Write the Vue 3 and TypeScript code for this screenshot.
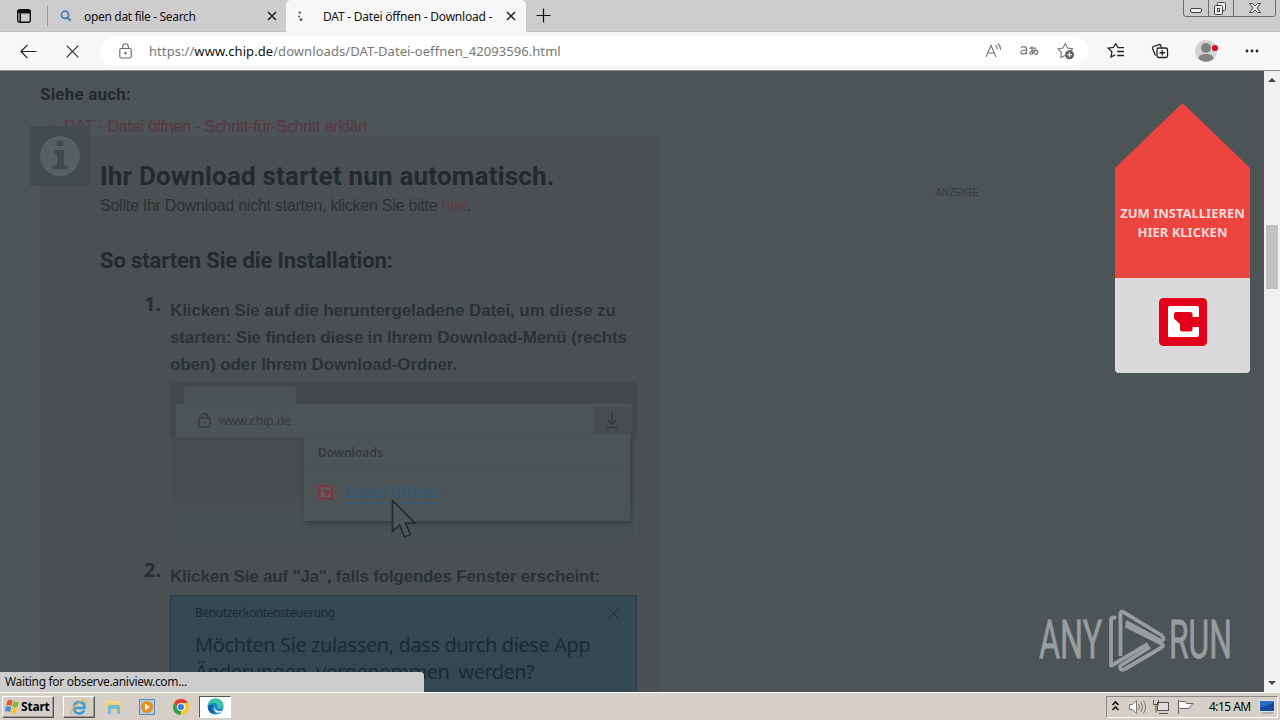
<script setup lang="ts">
interface Tab { title: string; active: boolean }
const tabs: Tab[] = [
  { title: 'open dat file - Search', active: false },
  { title: 'DAT - Datei öffnen - Download -', active: true },
]
const stepLines: string[] = [
  'Klicken Sie auf die heruntergeladene Datei, um diese zu',
  'starten: Sie finden diese in Ihrem Download-Menü (rechts',
  'oben) oder Ihrem Download-Ordner.',
]
</script>

<template>
  <div class="screen">
    <header class="tabbar">
      <svg class="tab-menu" width="16" height="16" viewBox="0 0 16 16"><rect x="1.7" y="1.7" width="12.6" height="12.6" rx="2" fill="none" stroke="#111" stroke-width="1.4" /><path d="M1.5 2h13v3.5H5V14H3.5V5H1.5z" fill="#111" /></svg>
      <div v-for="t in tabs" :key="t.title" class="tab" :class="{ active: t.active }">
        <svg v-if="!t.active" class="fav" width="12" height="12" viewBox="0 0 12 12"><circle cx="5" cy="4.8" r="3.6" fill="none" stroke="#4580b5" stroke-width="1.7" /><path d="M7.5 7.5l3.3 3.3" stroke="#4580b5" stroke-width="2" /></svg>
        <svg v-else class="fav" width="12" height="12" viewBox="0 0 12 12" fill="#666"><circle cx="2.8" cy="2.5" r="1.2" /><circle cx="2" cy="6.5" r="1.1" /><circle cx="4" cy="9.5" r="1.5" /></svg>
        <span class="tab-title">{{ t.title }}</span>
        <svg class="tab-x" width="10" height="10" viewBox="0 0 10 10"><path d="M1 1l8 8M9 1L1 9" stroke="#222" stroke-width="1.5" /></svg>
      </div>
      <svg class="plus" width="15" height="15" viewBox="0 0 15 15"><path d="M7.5 0.5v14M0.5 7.5h14" stroke="#111" stroke-width="1.2" /></svg>
      <svg class="winctl" width="94" height="18" viewBox="0 0 94 18" fill="none" stroke="#6d6d6d">
        <path d="M.5 0v14q0 2.500 2.500 2.500h87q2.500 0 2.500-2.500V0M25.500 0v16M50.500 0v16" />
        <g stroke="#444"><rect x="7.500" y="8.500" width="11" height="4" rx="1.500" fill="#eee" /><rect x="34.500" y="2.500" width="8" height="8" rx="1" fill="#eee" /><rect x="31.500" y="5.500" width="8" height="9" rx="1" fill="#eee" /><rect x="34.500" y="8.500" width="2" height="3" /><path d="M66.500 3.500h3l2.500 2.500 2.500-2.500h3l-3.500 4.500 3.500 4.500h-3l-2.500-2.500-2.500 2.500h-3l3.500-4.500z" fill="#eee" /></g>
      </svg>
    </header>

    <nav class="toolbar">
      <svg class="back" width="17" height="15" viewBox="0 0 17 15"><path d="M7.500 .8L.9 7.500l6.600 6.700M1 7.500h15.500" fill="none" stroke="#222" stroke-width="1.2" /></svg>
      <svg class="stop" width="13" height="13" viewBox="0 0 13 13"><path d="M.7 .7l11.600 11.600M12.300 .7L.7 12.300" stroke="#333" stroke-width="1.200" /></svg>
      <div class="address">
        <svg class="lock" width="13" height="16" viewBox="0 0 13 16" fill="none" stroke="#666" stroke-width="1.1"><rect x=".8" y="5.500" width="11.400" height="9.500" rx="1.500" /><path d="M3.700 5.500V3.500a2.800 2.800 0 0 1 5.600 0v2" /><circle cx="6.500" cy="10.200" r=".7" fill="#666" /></svg>
        <span class="url">https://<b>www.chip.de</b>/downloads/DAT-Datei-oeffnen_42093596.html</span>
        <svg class="addr-icons" width="90" height="20" viewBox="0 0 90 20" fill="none" stroke="#777" stroke-width="1.1">
          <path d="M.8 16.500L5.800 5l5 11.500M2.500 12.500h6.600M10.300 4.500q2 1.800 1.600 4.500M12.700 3q3 2.700 2.400 6.500" transform="translate(-.8 -.5)" />
          <path d="M36 7.200q1-1.300 2.800-1.300 2.800 0 2.800 2.800v4.900M41.600 9.400q-5.600-.3-5.600 2.200 0 1.900 2 1.900 2.400 0 3.600-2.200M44.200 7.500h7M47 5.500q-.3 5 1 8M50.500 9q-1.500 4.500-4.500 4.500-2.500-.5 .5-3 5.500-2.200 6.200 .5 .2 2.500-3 3" stroke-width="1.250" transform="translate(-1 -.3)" />
          <path d="M80.500 14.500l-4.200 2 .7-5-3.500-3.600 5-.8 2.300-4.500 2.300 4.500 5 .8-2 2.100" transform="translate(-1.500 0)" />
          <circle cx="83.500" cy="13.800" r="4.500" fill="#5f5f5f" stroke="none" /><path d="M81 13.800h5M83.500 11.300v5" stroke="#fff" />
        </svg>
      </div>
      <svg class="tools" width="180" height="24" viewBox="0 0 180 24" fill="none" stroke="#222" stroke-width="1.3">
        <path d="M14 5l-2.300 4-5.200 .7 3.700 3.600-.9 5.200 4.200-2.300M14 5l2.300 4.200h6M15.500 13h6.800M15.500 17h6.800" transform="translate(1.700 -.5)" />
        <path d="M55.500 16.500l-3-7q-.4-1.500 1-2L59 5.600q1.500-.4 2 1v2" /><rect x="57" y="9" width="10.500" height="9.500" rx="1.800" /><path d="M62.250 11v5.500M59.500 13.750h5.500" />
        <g stroke="none"><circle cx="106" cy="12" r="11" fill="#d3d3d3" /><circle cx="106" cy="9" r="5" fill="#85827f" /><path d="M98.500 20q0-5 7.500-5t7.500 5q-7.500 5.500-15 0z" fill="#85827f" /><circle cx="115" cy="9" r="3.100" fill="#e00b1c" /><circle cx="147" cy="12" r="1.400" fill="#222" /><circle cx="152" cy="12" r="1.400" fill="#222" /><circle cx="157" cy="12" r="1.400" fill="#222" /></g>
      </svg>
    </nav>

    <div class="viewport">
      <main class="page">
        <h4>Siehe auch:</h4>
        <div class="related"><i></i><span>DAT - Datei öffnen - Schritt-für-Schritt erklärt</span></div>
        <section class="panel">
          <div class="badge"><svg width="40" height="40" viewBox="0 0 40 40"><circle cx="20" cy="20" r="20" fill="#596063" /><path d="M17 4.500h6.500v5.500H17zM14 14h10v15h3.500v4.500h-15V29H17V18.500h-3z" fill="#434a4d" /></svg></div>
          <h1>Ihr Download startet nun automatisch.</h1>
          <p class="hint">Sollte Ihr Download nicht starten, klicken Sie bitte <em>hier</em>.</p>
          <h2>So starten Sie die Installation:</h2>
          <div class="step">
            <span class="num">1.</span>
            <div class="body">
              <p v-for="(l, i) in stepLines" :key="l" :class="'line l' + i">{{ l }}</p>
              <div class="shot">
                <div class="shot-tab"></div>
                <div class="shot-bar">
                  <svg width="13" height="15" viewBox="0 0 13 15" fill="none" stroke="#34393b" stroke-width="1.3"><rect x="1" y="5" width="11" height="9" rx="1" /><path d="M3.500 5V3.500a3 3 0 0 1 6 0V5M5.500 9.500h2" /></svg>
                  <span>www.chip.de</span>
                  <div class="dl"><svg width="14" height="16" viewBox="0 0 14 16" fill="none" stroke="#303638" stroke-width="1.4"><path d="M7 0v11M2.500 7L7 11.300 11.500 7M1.500 14.500h11" /></svg></div>
                </div>
                <div class="shot-page"></div>
                <div class="popup">
                  <div class="popup-head">Downloads</div>
                  <div class="popup-row"><svg width="15" height="15" viewBox="0 0 48 48"><rect width="48" height="48" rx="9" fill="#7a393f" /><path d="M9 8h31v11h-7v-5H15v6l6 6v8h12v-5h7v10H9z" fill="#5c6366" /></svg><span>Datei öffnen</span></div>
                </div>
                <svg class="cursor" width="25" height="40" viewBox="0 0 25 40"><path d="M1.500 1.500v31l7-6.500 5 12 6-2.500-5-11.500h9z" fill="#4e5558" stroke="#242c2f" stroke-width="1.700" /></svg>
              </div>
            </div>
          </div>
          <div class="step second">
            <span class="num">2.</span>
            <div class="body">
              <p class="line l3">Klicken Sie auf "Ja", falls folgendes Fenster erscheint:</p>
              <div class="uac">
                <div class="uac-head"><span>Benutzerkontensteuerung</span><svg width="11" height="11" viewBox="0 0 11 11"><path d="M.5 .5l10 10M10.500 .5l-10 10" stroke="#1c2c37" /></svg></div>
                <p class="q1">Möchten Sie zulassen, dass durch diese App</p>
                <p class="q2">Änderungen&nbsp; vorgenommen&nbsp; werden?</p>
              </div>
            </div>
          </div>
        </section>
        <span class="ad">ANZEIGE</span>
        <aside class="promo">
          <div class="promo-arrow"><span class="pa">ZUM INSTALLIEREN</span><span class="pb">HIER KLICKEN</span></div>
          <div class="promo-logo"><svg width="48" height="48" viewBox="0 0 48 48"><rect width="48" height="48" rx="4.500" fill="#e2001a" /><path d="M10.500 8H38q2 0 2 2v9h-6.500v-3q0-2-2-2H17q-2 0-2 2v4q0 1 1 1.500l4 3.500q1 .8 1 2v4q0 2.500 2.500 2.500h8q2 0 2-2v-2.500H40v8q0 2-2 2H10.500q-1.500 0-1.500-1.500v-28Q9 8 10.500 8z" fill="#fff" /></svg></div>
        </aside>
        <svg class="watermark" width="200" height="66" viewBox="0 0 200 66">
          <g fill="#989d9f" stroke="#989d9f" stroke-width=".8" font-family="Roboto, sans-serif" font-size="53"><text transform="translate(2 50) scale(.61 1)">ANY</text><text transform="translate(132 50) scale(.6 1)">RUN</text></g>
          <g fill="none" stroke="#989d9f" stroke-width="3.800" stroke-linejoin="round"><path d="M79 10.500q-5-3-5 3v43.500q0 1 1.500 0L111 36" /><path d="M83.500 48V6q0-3.500 3-1.800L124 27q4 3 1.500 5.500-1 1-5-1.500L89 14" /><path d="M88.500 17.500l36 18q3 2 0 4L87 61.500q-4 1.500-4-3.500L113 39" /></g>
        </svg>
      </main>
      <div class="scrollbar"><i class="up"></i><b></b><i class="down"></i></div>
      <div class="status"><span>Waiting for observe.aniview.com...</span></div>
    </div>

    <footer class="taskbar">
      <div class="start"><svg width="15" height="15" viewBox="0 0 15 15"><path d="M2.500 1.500Q5 0 7.500 1.800L6.300 7Q4 5.300 1 6.700z" fill="#e5562b" /><path d="M8.500 2.200q3 1.500 5.500 .2L12.500 7.600Q10 9 7.300 7.400z" fill="#7fb93f" /><path d="M.8 7.700Q4 6.500 6.100 8L5 13Q2 11.300 0 12.500z" fill="#3f8cdd" /><path d="M7.100 8.500q2.900 1.500 5.200 .2L11 14q-3 1-5.200-.5z" fill="#f4c52e" /></svg><span>Start</span></div>
      <div class="app ie"><svg width="18" height="18" viewBox="0 0 18 18" fill="none"><path d="M14.500 12.500Q12.500 15.500 9 15.500q-5-.5-5-6T9.500 4q5.500 .5 5.200 6H5.500" stroke="#379bd4" stroke-width="2.300" /><path d="M2.500 16Q-1 15 5.500 7.500 13 0 16.300 2.300q.8 1-1 3.500" stroke="#dfb545" stroke-width="1.200" /></svg></div>
      <svg class="explorer" width="17" height="17" viewBox="0 0 17 17"><path d="M1 3l5-1 1 1.500h8v9H1z" fill="#f3dc85" /><path d="M2 5h14v8H2z" fill="#ead27b" /><path d="M3 9q0-2 2-2h8q2 0 2 2v7h-3v-5H6v5H3z" fill="#76b9dc" /></svg>
      <svg class="media" width="16" height="16" viewBox="0 0 16 16"><rect x=".5" y=".5" width="15" height="15" fill="#a7cbe9" stroke="#608db9" /><circle cx="8" cy="8" r="6" fill="#f08b1e" /><path d="M6 4.500l5 3.500-5 3.500z" fill="#fff" /></svg>
      <svg class="chrome" width="16" height="16" viewBox="0 0 16 16"><circle cx="8" cy="8" r="8" fill="#f7c928" /><path d="M1 4a8 8 0 0 1 14 0H8L5 10z" fill="#df4033" /><path d="M1 4l4 6 3.500 2L7 16A8 8 0 0 1 1 4z" fill="#2aa34f" /><circle cx="8" cy="8" r="4" fill="#fff" /><circle cx="8" cy="8" r="3.100" fill="#3b7ee4" /></svg>
      <div class="app edge"><svg width="17" height="17" viewBox="0 0 17 17"><circle cx="8.500" cy="8.500" r="8" fill="#1788ce" /><path d="M.5 8Q2 .5 9 .5q7 .5 7.500 6.500 0 3.500-4 3.500-2.500 0-2-1.500Q11 6 7.500 5 3 4.500 .5 8z" fill="#3bc5a1" /><path d="M6.500 7q-4 5 1.500 9-6-.5-7-6Q2 6 6.500 7z" fill="#155ea4" /><path d="M8 8.500q-1 4 4.500 4.800 2-.3 3-1-3 3.500-6 2.200Q6 12 8 8.500z" fill="#fff" /></svg></div>
      <div class="tray">
        <svg width="92" height="18" viewBox="0 0 92 18" fill="none">
          <path d="M6.500 7l3-3 3 3M6.500 12l3-3 3 3" stroke="#111" stroke-width="1.600" transform="translate(-1 0)" />
          <g stroke="#777"><path d="M22.500 6.500h3l4-4v13l-4-4h-3z" fill="#fff" /><path d="M31.500 6q2 3 0 6M34 4q3 5 0 10M36.500 2.500q4 6.500 0 13" /></g>
          <g stroke="#555"><rect x="50.500" y="4.500" width="11" height="8" fill="#ddd" /><path d="M52 15.500h9M46.500 2v4.500h5V2M49 6.500v8" /></g>
          <path d="M71.500 2v14M72.500 3.500h6l1 2h6.500q-3 2.500-4 5h-9.500" fill="#fff" stroke="#666" />
        </svg>
        <span class="clock">4:15 AM</span>
        <svg class="desk" width="16" height="14" viewBox="0 0 16 14"><rect x=".5" y=".5" width="15" height="11" fill="#286dc6" stroke="#d5e5ef" /><path d="M1 7q7 0 14-5v9H1z" fill="#164995" /><path d="M3 13h11" stroke="#8593a0" /></svg>
      </div>
    </footer>
  </div>
</template>

<style>
body { margin: 0; overflow: hidden; }
</style>
<style scoped>
* { box-sizing: border-box; }
p, h1, h2, h4 { margin: 0; white-space: nowrap; }
svg { display: block; flex: none; }
.screen { width: 1280px; height: 720px; display: flex; flex-direction: column; overflow: hidden; font-family: "Noto Sans", sans-serif; }
.tabbar { height: 32px; flex: none; display: flex; background: #cdcdcd; position: relative; border-bottom: 1px solid #c3c3c3; }
.tab-menu { margin: 8px 15px 0 16px; }
.tab { height: 32px; width: 239px; display: flex; align-items: center; border-left: 1px solid #999; padding-left: 12px; font-size: 12px; color: #111; white-space: nowrap; }
.tab.active { background: #f7f7f7; border: 0; border-radius: 5px 5px 0 0; width: 240px; padding-left: 11px; }
.tab-title { margin-left: 12px; width: 183px; letter-spacing: -.32px; }
.tab.active .tab-title { margin-left: 14px; letter-spacing: -.23px; }
.tab:not(.active) { height: 20px; margin-top: 6px; }
.plus { margin: 8px 0 0 10px; }
.winctl { margin-left: auto; margin-right: 3px; }
.toolbar { height: 39px; flex: none; background: #f7f7f7; display: flex; align-items: center; border-bottom: 1px solid #8c8e8f; padding-left: 20px; }
.stop { margin-left: 29px; }
.address { margin-left: 21px; width: 988px; height: 30px; border-radius: 15px; background: #fff; display: flex; align-items: center; padding-left: 20px; }
.lock { margin-left: -1px; margin-right: 1px; }
.url { margin-left: 16px; font-size: 13px; color: #777; letter-spacing: .07px; white-space: nowrap; }
.url b { font-weight: 400; color: #111; }
.addr-icons { margin-left: auto; margin-right: 12px; }
.tools { margin-left: 12px; }
.viewport { height: 621px; flex: none; display: flex; position: relative; background: #4d5456; }
.page { width: 1264px; height: 621px; overflow: hidden; position: relative; padding-left: 40px; }
h1, h2, h4 { font-family: Roboto, sans-serif; font-weight: 700; }
h4 { padding-top: 10px; font-size: 17px; line-height: 26px; letter-spacing: .2px; color: #23292b; }
.related { display: flex; align-items: center; height: 29px; margin-top: 5px; margin-bottom: -5px; padding-left: 12px; font: 16px "Liberation Sans", sans-serif; letter-spacing: -.22px; color: #5b3440; }
.related i { width: 3px; height: 3px; border-radius: 2px; background: #5d3e46; margin-right: 9px; }
.panel { background: #4a5052; width: 620px; height: 600px; padding-left: 60px; position: relative; }
.badge { position: absolute; left: -10px; top: -10px; width: 60px; height: 60px; background: #434a4d; padding: 10px; }
h1 { padding-top: 22px; font-size: 26px; line-height: 36px; letter-spacing: .2px; color: #23292c; }
.hint { padding-top: 1px; font: 16px/22px "Liberation Sans", sans-serif; letter-spacing: -.25px; color: #293033; }
.hint em { font-style: normal; color: #5f3a44; }
h2 { margin-top: 29px; font-size: 22px; line-height: 30px; letter-spacing: -.13px; color: #23292c; }
.step { display: flex; padding-left: 44px; margin-top: 21px; height: 246px; }
.num { width: 26px; font-size: 20px; line-height: 14px; font-weight: 700; color: #262d30; }
.line { font: bold 17px/27px "Liberation Sans", sans-serif; letter-spacing: -.09px; color: #2a3134; }
.l1 { letter-spacing: -.14px; }
.l2 { letter-spacing: -.12px; }
.l3 { letter-spacing: -.2px; }
.shot { width: 467px; height: 160px; margin-top: 4px; background: #43494b; display: flex; flex-direction: column; position: relative; }
.shot-tab { width: 112px; height: 17px; margin: 5px 0 0 14px; background: #4c5355; border-radius: 4px 4px 0 0; flex: none; }
.shot-bar { height: 33px; margin: 0 6px; background: #4d5456; display: flex; align-items: center; padding-left: 22px; font-size: 12px; color: #34393b; flex: none; }
.shot-bar span { margin-left: 8px; margin-top: -1px; }
.dl { width: 38px; height: 28px; margin-left: auto; background: #464c4f; display: grid; place-items: center; }
.shot-page { flex: 1; background: linear-gradient(#474d4f 0 55px, #4a5153 80px); border: 1px solid #4d5456; border-top: 1px solid #454b4d; }
.popup { position: absolute; left: 134px; top: 52px; width: 326px; height: 87px; background: #4d5456; box-shadow: 1px 3px 4px #373e41; }
.popup-head { height: 37px; padding: 10px 0 0 14px; border-bottom: 1px solid #495052; font-size: 12px; line-height: 18px; font-weight: 600; color: #34393b; }
.popup-row { display: flex; align-items: center; padding: 10px 0 0 14px; }
.popup-row span { margin-left: 12px; font-size: 17px; line-height: 22px; letter-spacing: -.2px; color: #2b5c7c; border-bottom: 1px solid #2b5c7c; }
.cursor { position: absolute; left: 221px; top: 117px; }
.second { margin-top: 20px; }
.uac { margin-top: 5px; width: 467px; height: 120px; padding: 9px 17px 0 24px; background: #344852; border: 1px solid #263b46; color: #1c2a33; }
.uac-head { display: flex; justify-content: space-between; font-size: 12px; line-height: 16px; letter-spacing: -.4px; align-items: center; }
.uac p { font-size: 20px; line-height: 27px; letter-spacing: -.4px; }
.uac .q1 { margin-top: 10px; }
.uac .q2 { letter-spacing: -.57px; }
.ad { position: absolute; left: 935px; top: 116px; font: 10px/12px "Liberation Sans", sans-serif; color: #363c3f; }
.promo { position: absolute; left: 1115px; top: 32px; width: 135px; }
.promo-arrow { height: 175px; padding-top: 101px; background: #ec443e; clip-path: polygon(50% 0, 100% 65px, 100% 100%, 0 100%, 0 65px); display: flex; flex-direction: column; align-items: center; font-size: 13px; line-height: 19px; font-weight: 700; color: #f7dada; white-space: nowrap; }
.promo-logo { height: 95px; background: #dadada; border-radius: 0 0 4px 4px; padding: 20px 44px; }
.watermark { position: absolute; left: 1037px; top: 537px; }
.scrollbar { width: 16px; height: 621px; background: #f1f1f1; display: flex; flex-direction: column; align-items: center; }
.scrollbar i { border: 4px solid transparent; }
.scrollbar .up { border-top: 0; border-bottom-color: #444; margin-top: 7px; }
.scrollbar b { width: 12px; height: 64px; background: #c1c1c1; margin-top: 143px; }
.scrollbar .down { border-bottom: 0; border-top-color: #444; margin-top: auto; margin-bottom: 7px; }
.status { position: absolute; left: 0; bottom: 0; width: 424px; height: 20px; background: #cdcdcd; border-radius: 0 4px 0 0; padding-left: 5px; font-size: 12px; line-height: 20px; letter-spacing: -.32px; color: #111; white-space: nowrap; }
.taskbar { height: 28px; background: #d6cfc7; border-top: 1px solid #fff; display: flex; align-items: center; padding-left: 2px; }
.start, .app { height: 22px; border: 1px solid; border-color: #fff #555 #555 #fff; box-shadow: inset -1px -1px #999; display: flex; align-items: center; }
.start { width: 52px; padding-left: 2px; margin-right: 9px; font: bold 12px "Noto Sans", sans-serif; letter-spacing: -.2px; }
.start span { margin-left: 1px; }
.app { justify-content: center; width: 32px; }
.edge { background: #fff; border-color: #555 #fff #fff #555; box-shadow: none; margin-left: 10px; }
.explorer { margin-left: 10px; }
.media { margin-left: 17px; }
.chrome { margin-left: 18px; }
.tray { margin-left: auto; margin-right: 2px; width: 172px; height: 22px; border: 1px solid; border-color: #888 #fff #fff #888; display: flex; align-items: center; font-size: 12px; white-space: nowrap; }
.clock { margin-left: 10px; width: 44px; letter-spacing: -.55px; }
.desk { margin-left: 6px; }
</style>
